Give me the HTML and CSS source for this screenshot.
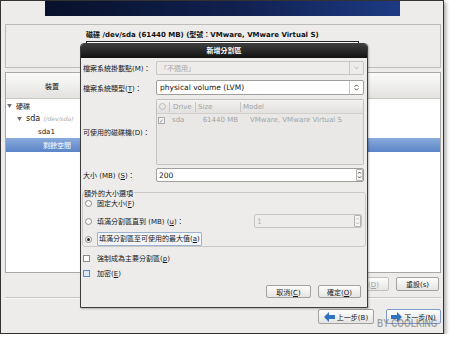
FILE: index.html
```html
<!DOCTYPE html>
<html lang="zh-Hant">
<head>
    <meta charset="UTF-8">
    <meta name="viewport" content="width=device-width, initial-scale=1.0">
    <title>新增分割區</title>
    <link rel="stylesheet" href="styles.css">
</head>
<body>
<div class="frame">
    <div class="banner"></div>

    <!-- disk summary -->
    <div class="disk-panel">
        <div class="disk-title">磁碟 /dev/sda (61440 MB) (型號：VMware, VMware Virtual S)</div>
        <div class="disk-bar"></div>
    </div>

    <!-- device tree -->
    <div class="device-panel">
        <div class="device-head"><span class="col-device">裝置</span></div>
        <ul class="tree">
            <li class="lvl0"><svg class="arrow" viewBox="0 0 6 5"><polygon points="0,0 6,0 3,5" /></svg>硬碟</li>
            <li class="lvl1"><svg class="arrow" viewBox="0 0 6 5"><polygon points="0,0 6,0 3,5" /></svg>sda <span class="dev">(/dev/sda)</span></li>
            <li class="lvl2">sda1</li>
            <li class="lvl2 selected">剩餘空間</li>
        </ul>
    </div>

    <div class="tool-row">
        <button class="btn tool"><span>建立(<u>C</u>)</span></button>
        <button class="btn tool"><span>編輯(<u>E</u>)</span></button>
        <button class="btn tool" disabled><span>刪除(<u>D</u>)</span></button>
        <button class="btn tool"><span>重設(s)</span></button>
    </div>
    <div class="sep"></div>
    <div class="nav-row">
        <button class="btn nav back">
            <svg class="nav-icon" viewBox="0 0 11 10"><polygon points="0,5 5,0 5,3 11,3 11,7 5,7 5,10" /></svg><span>上一步(B)</span>
        </button>
        <button class="btn nav next">
            <svg class="nav-icon" viewBox="0 0 11 10"><polygon points="11,5 6,0 6,3 0,3 0,7 6,7 6,10" /></svg><span>下一步(N)</span>
        </button>
    </div>

    <div class="watermark">BY COOLKING</div>

    <!-- add partition dialog -->
    <div class="dialog">
        <div class="dialog-title">新增分割區</div>
        <div class="dialog-body">
            <div class="field-row r-mount">
                <label>檔案系統掛載點(M)：</label>
                <div class="combo disabled">
                    <span class="combo-text">「不適用」</span>
                    <span class="combo-btn"><svg viewBox="0 0 6 4"><polyline points="0.5,0.5 3,3 5.5,0.5" /></svg></span>
                </div>
            </div>
            <div class="field-row r-type">
                <label>檔案系統類型(<u>T</u>)：</label>
                <div class="combo">
                    <span class="combo-text">physical volume (LVM)</span>
                    <span class="combo-btn"><svg viewBox="0 0 5 8"><polyline points="0.5,3 2.5,1 4.5,3" /><polyline points="0.5,5 2.5,7 4.5,5" /></svg></span>
                </div>
            </div>
            <div class="field-row r-drives">
                <label>可使用的磁碟機(D)：</label>
                <div class="drive-list">
                    <div class="drive-row drive-head">
                        <span class="c1"><span class="radio-sm"></span></span>
                        <span class="c2">Drive</span>
                        <span class="c3">Size</span>
                        <span class="c4">Model</span>
                    </div>
                    <div class="drive-row">
                        <span class="c1"><span class="check-sm">✓</span></span>
                        <span class="c2">sda</span>
                        <span class="c3 num">61440 MB</span>
                        <span class="c4 model">VMware, VMware Virtual S</span>
                    </div>
                </div>
            </div>
            <div class="field-row r-size">
                <label>大小 (MB) (<u>S</u>)：</label>
                <div class="spin">
                    <span class="spin-text">200</span>
                    <span class="spin-btn"><svg viewBox="0 0 5 10"><polyline points="1,3.5 2.5,2 4,3.5" /><polyline points="1,6.5 2.5,8 4,6.5" /></svg></span>
                </div>
            </div>

            <div class="size-options">
                <span class="legend">額外的大小選項</span>
                <div class="opt"><span class="radio"></span><span>固定大小(<u>F</u>)</span></div>
                <div class="opt">
                    <span class="radio"></span><span>填滿分割區直到 (MB) (<u>u</u>)：</span>
                    <div class="spin disabled small">
                        <span class="spin-text">1</span>
                        <span class="spin-btn"><svg viewBox="0 0 5 10"><polyline points="1,3.5 2.5,2 4,3.5" /><polyline points="1,6.5 2.5,8 4,6.5" /></svg></span>
                    </div>
                </div>
                <div class="opt"><span class="radio on"></span><span class="focus">填滿分割區至可使用的最大值(<u>a</u>)</span></div>
            </div>

            <div class="check-row first"><span class="check"></span><span>強制成為主要分割區(<u>p</u>)</span></div>
            <div class="check-row"><span class="check blue"></span><span>加密(<u>E</u>)</span></div>

            <div class="dialog-buttons">
                <button class="btn cancel"><span>取消(<u>C</u>)</span></button>
                <button class="btn ok"><span>確定(<u>O</u>)</span></button>
            </div>
        </div>
    </div>
</div>
</body>
</html>
```

FILE: styles.css
```css
* {
    box-sizing: border-box;
}

body {
    margin: 0;
    background: #fff;
    font-family: "DejaVu Sans", "Noto Sans CJK TC", sans-serif;
    font-size: 7px;
    color: #161616;
}

.frame {
    position: relative;
    width: 444px;
    height: 334px;
    border: 1px solid #333;
    background: #edeceb;
    box-shadow: 2px 2px 4px rgba(0, 0, 0, 0.35);
    overflow: hidden;
}

.banner {
    margin-left: 44px;
    width: 355px;
    height: 15px;
    background: linear-gradient(90deg, #08112a, #112150 55%, #1c3a84);
}

/* disk summary */
.disk-panel {
    margin: 8px 2px 0 4px;
    height: 44px;
    border: 1px solid #bdbbb7;
    padding: 6px 0 0 80px;
}

.disk-title {
    font-weight: bold;
    line-height: 8px;
    color: #111;
    white-space: nowrap;
}

.disk-bar {
    margin-top: 2px;
    width: 273px;
    height: 22px;
    border: 1px solid #222;
    background: #fff;
}

/* device tree */
.device-panel {
    margin: 4px 2px 0 4px;
    height: 201px;
    border: 1px solid #aaa8a4;
    background: #fff;
}

.device-head {
    height: 26px;
    display: flex;
    align-items: center;
    background: linear-gradient(#fbfbfa, #e3e2e0);
    border-bottom: 1px solid #c8c6c2;
}

.col-device {
    width: 92px;
    text-align: center;
}

.tree {
    list-style: none;
    margin: 0;
    padding: 0;
}

.tree li {
    height: 13px;
    display: flex;
    align-items: center;
    white-space: nowrap;
}

.arrow {
    width: 5px;
    height: 4px;
    margin-right: 4px;
    fill: #6f6f6f;
}

.lvl0 {
    padding-left: 1px;
}

.lvl1 {
    padding-left: 11px;
    font-size: 8px;
}

.lvl2 {
    padding-left: 32px;
}

.tree li.selected {
    height: 14px;
    padding-left: 37px;
    color: #fff;
    background: linear-gradient(#8aabdc, #5b84c7);
}

.dev {
    margin-left: 3px;
    font-size: 6px;
    font-style: italic;
    color: #a8a8a8;
}

/* buttons */
.btn {
    height: 14px;
    padding: 0;
    border: 1px solid #a3a19d;
    border-radius: 2px;
    background: linear-gradient(#fdfdfc, #e5e4e2);
    font-family: inherit;
    font-size: 7px;
    color: #161616;
    display: flex;
    align-items: center;
    justify-content: center;
    white-space: nowrap;
}

.btn:disabled {
    color: #a5a5a5;
    border-color: #c2c0bc;
}

.tool-row {
    display: flex;
    justify-content: flex-end;
    gap: 7px;
    margin: 4px 4px 0 0;
}

.tool {
    width: 45px;
}

.tool:last-child {
    width: 43px;
}

.sep {
    margin: 6px 2px 0 4px;
    border-top: 1px solid #c6c4c0;
    border-bottom: 1px solid #fafafa;
}

.nav-row {
    display: flex;
    justify-content: flex-end;
    gap: 12px;
    margin: 10px 2px 0 0;
}

.nav {
    width: 56px;
    height: 15px;
}

.nav.next {
    width: 55px;
    border-color: #7f9cc9;
}

.nav-icon {
    width: 11px;
    height: 10px;
    margin-right: 2px;
    fill: #2f72bd;
}

.watermark {
    position: absolute;
    left: 376px;
    top: 316px;
    font-family: "Liberation Sans", sans-serif;
    font-weight: bold;
    font-size: 11px;
    white-space: nowrap;
    transform: scaleX(0.78);
    transform-origin: left top;
    color: rgba(110, 110, 110, 0.6);
}

/* dialog */
.dialog {
    position: absolute;
    left: 79px;
    top: 42px;
    width: 288px;
    height: 265px;
    border: 1px solid #3c3c3c;
    border-radius: 4px 4px 0 0;
    background: #edeceb;
    box-shadow: 1px 1px 2px rgba(0, 0, 0, 0.25);
}

.dialog-title {
    height: 14px;
    line-height: 14px;
    text-align: center;
    font-weight: bold;
    color: #fff;
    background: linear-gradient(#3d3d3d, #121212);
    border-radius: 3px 3px 0 0;
}

.dialog-body {
    padding: 0 3px 0 2px;
}

.field-row {
    display: grid;
    grid-template-columns: 73px 1fr;
    align-items: center;
    white-space: nowrap;
}

.r-mount {
    margin-top: 3px;
    height: 14px;
}

.r-type {
    margin-top: 5px;
    height: 15px;
}

.r-drives {
    margin-top: 4px;
    height: 66px;
}

.r-size {
    margin-top: 3px;
    height: 14px;
}

.combo {
    height: 100%;
    display: flex;
    align-items: center;
    border: 1px solid #a19f9b;
    border-radius: 2px;
    background: #fff;
    font-size: 7.5px;
}

.combo.disabled {
    background: #edeceb;
    border-color: #c8c6c2;
    color: #a8a8a8;
    font-size: 7px;
}

.combo-text {
    flex: 1;
    padding-left: 3px;
}

.combo-btn {
    width: 14px;
    height: 100%;
    border-left: 1px solid #c9c7c3;
    display: flex;
    align-items: center;
    justify-content: center;
}

.combo-btn svg {
    width: 5px;
    height: 7px;
    fill: none;
    stroke: #333;
    stroke-width: 1;
}

.combo.disabled .combo-btn svg {
    height: 4px;
    stroke: #aaa;
}

.drive-list {
    height: 100%;
    border: 1px solid #c4c2be;
    border-radius: 2px;
    background: #e9e8e6;
    color: #a3a3a3;
}

.drive-row {
    display: grid;
    grid-template-columns: 12px 26px 45px 1fr;
    align-items: center;
    height: 12px;
}

.drive-head {
    height: 14px;
    background: linear-gradient(#f3f2f1, #e2e1df);
    border-bottom: 1px solid #d2d0cc;
}

.drive-head .c2,
.drive-head .c3,
.drive-head .c4 {
    border-left: 1px solid #c9c7c3;
    padding-left: 2px;
    height: 10px;
    line-height: 10px;
}

.drive-row .c1 {
    display: flex;
    padding-left: 1px;
}

.drive-row .c2 {
    padding-left: 3px;
}

.num {
    text-align: right;
    padding-right: 2px;
}

.model {
    padding-left: 10px;
}

.radio-sm {
    width: 7px;
    height: 7px;
    border: 1px solid #bbb;
    border-radius: 50%;
    margin-left: 1px;
}

.check-sm {
    width: 7px;
    height: 7px;
    border: 1px solid #aaa;
    background: #f4f4f4;
    font-size: 6px;
    line-height: 5px;
    text-align: center;
    color: #777;
}

.spin {
    height: 100%;
    display: flex;
    align-items: center;
    border: 1px solid #a19f9b;
    border-radius: 2px;
    background: #fff;
    font-size: 7.5px;
}

.spin-text {
    flex: 1;
    padding-left: 2px;
}

.spin-btn {
    width: 7px;
    height: 12px;
    border: 1px solid #b5b3af;
    border-radius: 1px;
    background: #f5f5f4;
    display: flex;
    align-items: center;
    justify-content: center;
}

.spin-btn svg {
    width: 5px;
    height: 10px;
    fill: none;
    stroke: #333;
    stroke-width: 0.9;
}

.spin.disabled {
    background: #edeceb;
    border-color: #c6c4c0;
    color: #b0b0b0;
}

.spin.disabled .spin-btn svg {
    stroke: #b3b3b3;
}

.spin.small {
    margin-left: auto;
    width: 108px;
    height: 14px;
}

/* extra size options */
.size-options {
    position: relative;
    margin: 10px -2px 0 -1px;
    padding: 3px 3px 0 2px;
    height: 55px;
    border: 1px solid #cbc9c5;
    border-radius: 3px;
}

.legend {
    position: absolute;
    left: 1px;
    top: -5px;
    padding-right: 1px;
    background: #edeceb;
}

.opt {
    display: flex;
    align-items: center;
    height: 14px;
    margin-bottom: 4px;
    white-space: nowrap;
}

.radio {
    width: 7px;
    height: 7px;
    margin-right: 5px;
    border: 1px solid #8c8a86;
    border-radius: 50%;
    background: #fff;
    display: flex;
    align-items: center;
    justify-content: center;
}

.radio.on::after {
    content: "";
    width: 3px;
    height: 3px;
    border-radius: 50%;
    background: #2a2a2a;
}

.focus {
    height: 14px;
    line-height: 12px;
    padding: 0 1px;
    border: 1px solid #9cb2d2;
    border-radius: 1px;
    background: #f3f5f8;
}

.check-row {
    display: flex;
    align-items: center;
    height: 14px;
    margin-top: 1px;
}

.check-row.first {
    margin-top: 4px;
}

.check {
    width: 7px;
    height: 7px;
    margin-right: 7px;
    border: 1px solid #8c8a86;
    background: #fff;
}

.check.blue {
    border-color: #5f87c6;
    background: #dfe8f6;
}

.dialog-buttons {
    display: flex;
    justify-content: flex-end;
    gap: 7px;
    margin: 5px 3px 0 0;
}

.cancel {
    width: 45px;
    height: 13px;
}

.ok {
    width: 43px;
    height: 13px;
}
```
